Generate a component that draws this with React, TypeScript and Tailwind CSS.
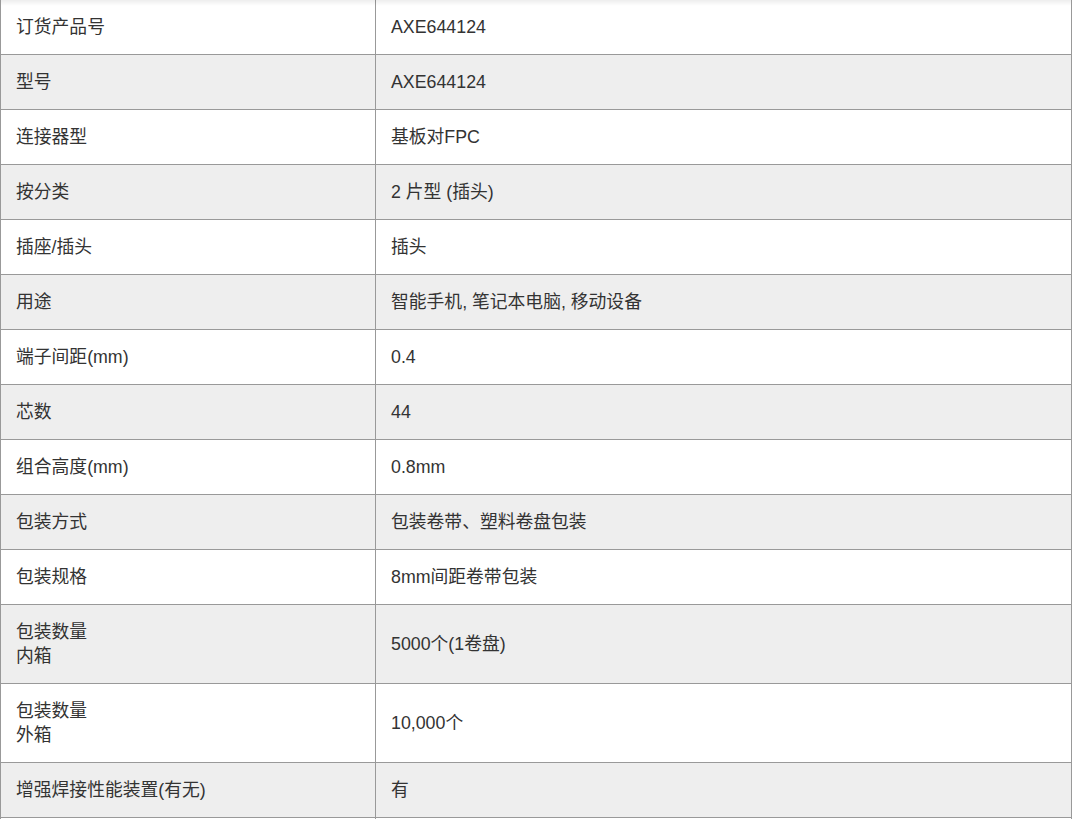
const rows: { label: string[]; value: string }[] = [
  { label: ['订货产品号'], value: 'AXE644124' },
  { label: ['型号'], value: 'AXE644124' },
  { label: ['连接器型'], value: '基板对FPC' },
  { label: ['按分类'], value: '2 片型 (插头)' },
  { label: ['插座/插头'], value: '插头' },
  { label: ['用途'], value: '智能手机, 笔记本电脑, 移动设备' },
  { label: ['端子间距(mm)'], value: '0.4' },
  { label: ['芯数'], value: '44' },
  { label: ['组合高度(mm)'], value: '0.8mm' },
  { label: ['包装方式'], value: '包装卷带、塑料卷盘包装' },
  { label: ['包装规格'], value: '8mm间距卷带包装' },
  { label: ['包装数量', '内箱'], value: '5000个(1卷盘)' },
  { label: ['包装数量', '外箱'], value: '10,000个' },
  { label: ['增强焊接性能装置(有无)'], value: '有' },
];

export default function App() {
  return (
    <div
      className="relative w-[1072px] border-x border-[#999] bg-white text-[#333] text-[17.8px] leading-[24px]"
      style={{ fontFamily: '"Liberation Sans", Arial, "Noto Sans CJK SC", sans-serif' }}
    >
      {rows.map((row, i) => (
        <div
          key={i}
          className={`flex border-b border-[#999] ${i % 2 === 1 ? 'bg-[#eee]' : 'bg-white'}`}
        >
          <div className="w-[375px] shrink-0 border-r border-[#999] px-[15px] py-[15px]">
            {row.label.map((line, j) => (
              <div key={j}>{line}</div>
            ))}
          </div>
          <div className="flex flex-1 items-center px-[15px] py-[15px]">{row.value}</div>
        </div>
      ))}
      {/* next row continues below the fold */}
      <div className="flex h-[54px] bg-white">
        <div className="w-[375px] shrink-0 border-r border-[#999]" />
        <div className="flex-1" />
      </div>
      <div className="pointer-events-none absolute inset-x-0 top-0 h-[6px] bg-gradient-to-b from-black/[0.07] to-transparent" />
    </div>
  );
}
